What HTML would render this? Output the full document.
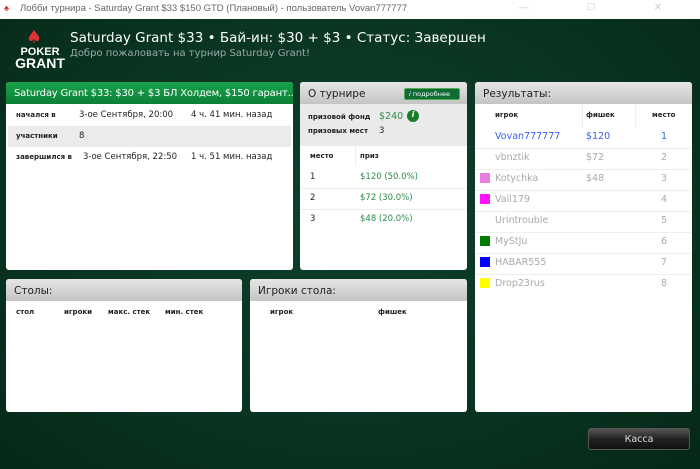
<!DOCTYPE html>
<html><head><meta charset="utf-8"><style>
*{margin:0;padding:0;box-sizing:border-box}
body{width:700px;height:469px;overflow:hidden;font-family:"DejaVu Sans","Liberation Sans",sans-serif;background:radial-gradient(ellipse at 50% 45%,#0c4029 0%,#093421 60%,#062818 100%);position:relative;color:#222}
.tb{position:absolute;left:0;top:0;width:700px;height:19px;background:#fff;font-size:9.5px;color:#666;padding:3px 0 0 20px;font-family:"Liberation Sans",sans-serif}
.tb .ctl{position:absolute;right:10px;top:2px;color:#ccc;letter-spacing:28px}
.p{position:absolute;background:#fff;border-radius:3px;overflow:hidden}
.h{height:22px;background:linear-gradient(#e6e6e6,#c4c4c4);font-size:10.5px;padding:6px 0 0 8px;color:#222;white-space:nowrap;overflow:hidden}
.hg{background:linear-gradient(#17a34b,#0c7f36);color:#fff;font-size:10px;letter-spacing:-0.2px}
.a{position:absolute;font-size:8.5px;white-space:nowrap}
.b{font-weight:bold;font-size:7px}
.g{color:#2d8a4a}
.gr{color:#aaa}
.bl{color:#3a5ff0}
.sq{position:absolute;width:10px;height:10px}
.ln{position:absolute;height:1px;background:#eee;left:0;right:0}
</style></head><body>
<div class="tb"><span style="position:absolute;left:4px;top:3px;color:#c33">♠</span>Лобби турнира - Saturday Grant $33 $150 GTD (Плановый) - пользователь Vovan777777<span class="ctl">— ☐ ✕</span></div>
<div style="position:absolute;left:26px;top:27px;color:#d33;font-size:18px">♠</div>
<div style="position:absolute;left:15px;top:47px;color:#fff;font-weight:bold;font-size:11px;font-family:'Liberation Sans',sans-serif;line-height:11px;text-align:center;width:50px">POKER<br><span style="font-size:14px">GRANT</span></div>
<div style="position:absolute;left:70px;top:30px;color:#fff;font-size:13.5px">Saturday Grant $33 • Бай-ин: $30 + $3 • Статус: Завершен</div>
<div style="position:absolute;left:70px;top:48px;color:#9aa;font-size:10px">Добро пожаловать на турнир Saturday Grant!</div>

<div class="p" style="left:6px;top:82px;width:287px;height:188px">
<div class="h hg">Saturday Grant $33: $30 + $3 БЛ Холдем, $150 гарант...</div>
<div style="position:absolute;left:2px;top:44px;width:283px;height:21px;background:#ebebeb"></div>
<div class="a b" style="left:10px;top:29px">начался в</div><div class="a" style="left:73px;top:28px">3-ое Сентября, 20:00</div><div class="a" style="left:185px;top:28px">4 ч. 41 мин. назад</div>
<div class="a b" style="left:10px;top:50px">участники</div><div class="a" style="left:73px;top:49px">8</div>
<div class="a b" style="left:10px;top:71px">завершился в</div><div class="a" style="left:77px;top:70px">3-ое Сентября, 22:50</div><div class="a" style="left:185px;top:70px">1 ч. 51 мин. назад</div>
</div>

<div class="p" style="left:300px;top:82px;width:167px;height:188px">
<div class="h">О турнире</div>
<div style="position:absolute;left:104px;top:6px;width:56px;height:12px;background:#0d6b33;border:1px solid #5a5;border-radius:2px;color:#fff;font-size:6.5px;padding:1px 0 0 4px"><i>i</i> подробнее</div>
<div style="position:absolute;left:0;top:22px;width:167px;height:42px;background:#eaeaea"></div>
<div class="a b" style="left:8px;top:31px">призовой фонд</div><div class="a g" style="left:79px;top:29px;font-size:9.5px">$240</div>
<div style="position:absolute;left:107px;top:28px;width:12px;height:12px;border-radius:6px;background:#1a7d2e;color:#fff;font-size:8px;text-align:center;font-weight:bold;font-style:italic">i</div>
<div class="a b" style="left:8px;top:45px">призовых мест</div><div class="a" style="left:79px;top:44px">3</div>
<div class="a b" style="left:10px;top:70px">место</div><div class="a b" style="left:60px;top:70px">приз</div>
<div style="position:absolute;left:55px;top:64px;width:1px;height:20px;background:#eee"></div>
<div class="a" style="left:10px;top:90px">1</div><div class="a g" style="left:60px;top:90px">$120 (50.0%)</div>
<div class="ln" style="top:106px"></div>
<div class="a" style="left:10px;top:111px">2</div><div class="a g" style="left:60px;top:111px">$72 (30.0%)</div>
<div class="ln" style="top:127px"></div>
<div class="a" style="left:10px;top:132px">3</div><div class="a g" style="left:60px;top:132px">$48 (20.0%)</div>
</div>

<div class="p" style="left:475px;top:82px;width:217px;height:330px">
<div class="h">Результаты:</div>
<div class="a b" style="left:20px;top:29px">игрок</div><div class="a b" style="left:111px;top:29px">фишек</div><div class="a b" style="left:177px;top:29px">место</div>
<div style="position:absolute;left:107px;top:22px;width:1px;height:24px;background:#eee"></div><div style="position:absolute;left:160px;top:22px;width:1px;height:24px;background:#eee"></div>
<div class="a bl" style="left:20px;top:49px;font-size:9.5px">Vovan777777</div><div class="a bl" style="left:111px;top:49px;font-size:9.5px">$120</div><div class="a bl" style="left:186px;top:49px;font-size:9.5px">1</div>
<div class="ln" style="top:66px"></div>
<div class="a gr" style="left:20px;top:70px;font-size:9.5px">vbnztik</div><div class="a gr" style="left:111px;top:70px;font-size:9.5px">$72</div><div class="a gr" style="left:186px;top:70px;font-size:9.5px">2</div>
<div class="ln" style="top:87px"></div>
<div class="sq" style="left:5px;top:91px;background:#e87fe0"></div><div class="a gr" style="left:20px;top:91px;font-size:9.5px">Kotychka</div><div class="a gr" style="left:111px;top:91px;font-size:9.5px">$48</div><div class="a gr" style="left:186px;top:91px;font-size:9.5px">3</div>
<div class="ln" style="top:108px"></div>
<div class="sq" style="left:5px;top:112px;background:#ff10ff"></div><div class="a gr" style="left:20px;top:112px;font-size:9.5px">Vall179</div><div class="a gr" style="left:186px;top:112px;font-size:9.5px">4</div>
<div class="ln" style="top:129px"></div>
<div class="a gr" style="left:20px;top:133px;font-size:9.5px">Urintrouble</div><div class="a gr" style="left:186px;top:133px;font-size:9.5px">5</div>
<div class="ln" style="top:150px"></div>
<div class="sq" style="left:5px;top:154px;background:#007a00"></div><div class="a gr" style="left:20px;top:154px;font-size:9.5px">MyStJu</div><div class="a gr" style="left:186px;top:154px;font-size:9.5px">6</div>
<div class="ln" style="top:171px"></div>
<div class="sq" style="left:5px;top:175px;background:#0000ff"></div><div class="a gr" style="left:20px;top:175px;font-size:9.5px">HABAR555</div><div class="a gr" style="left:186px;top:175px;font-size:9.5px">7</div>
<div class="ln" style="top:192px"></div>
<div class="sq" style="left:5px;top:196px;background:#ffff00"></div><div class="a gr" style="left:20px;top:196px;font-size:9.5px">Drop23rus</div><div class="a gr" style="left:186px;top:196px;font-size:9.5px">8</div>
</div>

<div class="p" style="left:6px;top:279px;width:236px;height:133px">
<div class="h">Столы:</div>
<div class="a b" style="left:10px;top:29px">стол</div><div class="a b" style="left:58px;top:29px">игроки</div><div class="a b" style="left:102px;top:29px">макс. стек</div><div class="a b" style="left:159px;top:29px">мин. стек</div>
</div>
<div class="p" style="left:250px;top:279px;width:217px;height:133px">
<div class="h">Игроки стола:</div>
<div class="a b" style="left:20px;top:29px">игрок</div><div class="a b" style="left:128px;top:29px">фишек</div>
</div>

<div style="position:absolute;left:588px;top:428px;width:102px;height:22px;border-radius:3px;border:1px solid #555;background:linear-gradient(#555,#222 50%,#111);color:#ddd;font-size:9.5px;text-align:center;padding-top:5px">Касса</div>
</body></html>
